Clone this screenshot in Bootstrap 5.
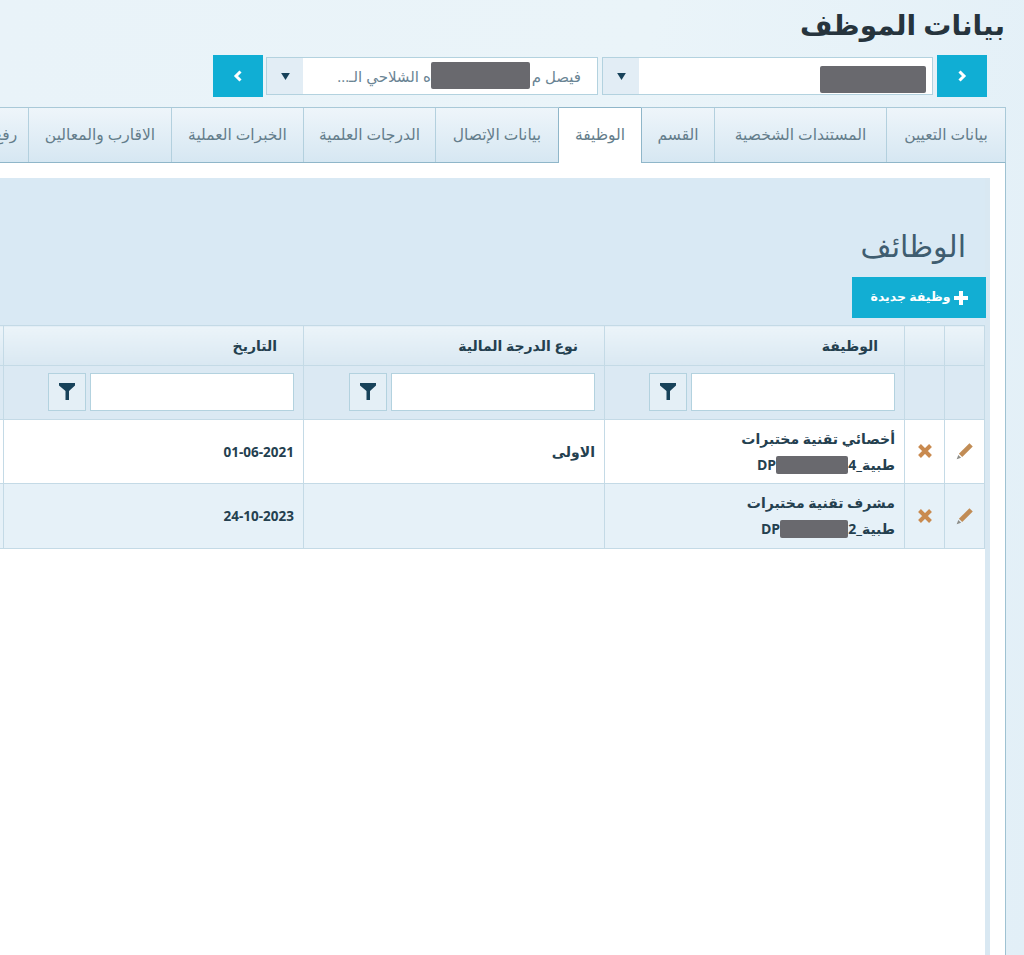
<!DOCTYPE html>
<html lang="ar" dir="rtl">
<head>
<meta charset="UTF-8">
<title>بيانات الموظف</title>
<link href="https://cdn.jsdelivr.net/npm/bootstrap@5.3.0/dist/css/bootstrap.min.css" rel="stylesheet">
<style>
html, body { height: 100%; overflow: hidden; }
body {
    font-family: "Open Sans", "DejaVu Sans", sans-serif;
    color: #24404f;
    background: linear-gradient(100deg, #e9f3f9 0%, #eaf4f9 55%, #e2eff7 100%);
    padding: 10px 18px 0 0;
    display: flex;
    flex-direction: column;
}
.page-title { font-size: 28px; font-weight: 700; color: #26343d; margin: 0; height: 45px; line-height: 28px; padding-right: 1px; }
.picker-row { padding-right: 19px; height: 42px; gap: 4px; margin-bottom: 10px; }
.arrow-btn { width: 50px; height: 42px; background: #10aed4; border: 0; border-radius: 0; padding: 0; display: flex; align-items: center; justify-content: center; }
.combo { height: 38px; background: #fff; border: 1px solid #b3d2df; margin-top: 2px; display: flex; }
.combo-one { width: 331px; }
.combo-two { width: 332px; margin-left: -1px; }
.combo-text { flex: 1; font-size: 15px; color: #6a8494; padding-right: 16px; line-height: 36px; white-space: nowrap; overflow: hidden; }
.combo-one .combo-text { padding-right: 6px; padding-top: 8px; line-height: 0; }
.combo-caret { width: 36px; background: #e2edf5; display: flex; align-items: center; justify-content: center; }
.redact { display: inline-block; background: #69696e; border-radius: 2px; vertical-align: middle; }
.redact-a { width: 106px; height: 27px; }
.redact-b { width: 99px; height: 27px; margin: -4px 2px 0 0; }
.redact-c { width: 72px; height: 18px; margin-top: -2px; }
.redact-d { width: 68px; height: 18px; margin-top: -2px; }
.emp-tabs { flex-wrap: nowrap; padding-right: 0; height: 56px; flex-shrink: 0; border-top: 1px solid #a9c9d8; border-bottom: 1px solid #8fb6c9; border-right: 1px solid #a9c9d8; background: linear-gradient(#eef5fa, #d6e7f2); }
.emp-tabs .nav-item { flex-shrink: 0; border-left: 1px solid #b3d0de; }
.emp-tabs .nav-link { height: 54px; line-height: 52px; padding: 0; text-align: center; font-size: 15.5px; color: #647d8b; border: 0; border-radius: 0; background: transparent; white-space: nowrap; }
.emp-tabs .nav-link.active { background: #fff; height: 56px; margin-top: -1px; border-top: 1px solid #8fb6c9; color: #647d8b; }
.emp-tabs .nav-item.active-item { margin-right: -1px; border-right: 1px solid #8fb6c9; border-left: 1px solid #8fb6c9; }
.emp-tabs .nav-item:nth-child(1) { width: 119px; }
.emp-tabs .nav-item:nth-child(2) { width: 172px; }
.emp-tabs .nav-item:nth-child(3) { width: 73px; }
.emp-tabs .nav-item:nth-child(4) { width: 84px; }
.emp-tabs .nav-item:nth-child(5) { width: 123px; }
.emp-tabs .nav-item:nth-child(6) { width: 132px; }
.emp-tabs .nav-item:nth-child(7) { width: 132px; }
.emp-tabs .nav-item:nth-child(8) { width: 143px; }
.emp-tabs .nav-item:nth-child(9) { width: 100px; }
.tab-body { flex: 1; background: #fff; border-right: 1px solid #9fc2d2; padding: 15px 15px 0 0; display: flex; flex-direction: column; min-height: 0; }
.inner-box { flex: 1; border-right: 5px solid #d9e8f2; background: linear-gradient(#d9e9f4 0, #d9e9f4 147px, #fff 147px); }
.jobs-title { font-size: 30px; font-weight: 400; color: #3f5d70; margin: 0; padding: 50px 19px 0 0; height: 99px; line-height: 36px; }
.new-job { display: flex; width: 134px; height: 41px; margin-right: -1px; align-items: center; justify-content: center; gap: 3px; background: #12aed3; color: #fff; font-size: 12.5px; font-weight: 700; border: 0; border-radius: 0; padding: 0; }
.jobs-table { table-layout: fixed; width: 1281px; margin: 7px 0 0; font-size: 14px; font-weight: 700; color: #24404f; --bs-table-border-color: #c4dae6; --bs-table-bg: transparent; }
.jobs-table > * > * > * { padding: 0; vertical-align: middle; color: #24404f; }
.head-row th { height: 40px; padding-right: 26px; background: linear-gradient(#ecf4f9, #d9e8f2); font-weight: 700; }
.filter-row td { height: 54px; background: #dbe9f3; padding: 0 9px 2px 0; }
.filter-wrap { display: flex; gap: 4px; }
.filter-wrap .form-control { width: 204px; height: 38px; border: 1px solid #b3d2df; border-radius: 0; background: #fff; padding: 0; }
.filter-btn { width: 38px; height: 38px; padding: 0; background: #e4eff6; border: 1px solid #b3d2df; border-radius: 0; display: flex; align-items: center; justify-content: center; }
.data-row td { height: 64px; background: #fff; padding: 0 9px 0 0; line-height: 26px; }
.data-row.alt td { height: 65px; background: #e6f1f8; }
.data-row td.icon-cell { text-align: center; padding: 0 0 3px; }
.date-cell { font-size: 13.5px; }
.col-icon { width: 40px; }
.col-wide { width: 300px; }
.col-mid { width: 301px; }
.job-code { unicode-bidi: isolate; direction: ltr; display: inline-block; }
</style>
</head>
<body>
<h1 class="page-title">بيانات الموظف</h1>

<div class="d-flex picker-row">
    <button type="button" class="arrow-btn"><svg width="10" height="12" viewBox="0 0 10 12"><path d="M2.5 1.5 7 6l-4.500 4.500" fill="none" stroke="#fff" stroke-width="3"/></svg></button>
    <div class="combo combo-one">
        <div class="combo-text"><span class="redact redact-a"></span></div>
        <div class="combo-caret"><svg width="9" height="7" viewBox="0 0 10 8"><path d="M0 0h10L5 8z" fill="#17425a"/></svg></div>
    </div>
    <div class="combo combo-two">
        <div class="combo-text">فيصل م<span class="redact redact-b"></span>ه الشلاحي الـ...</div>
        <div class="combo-caret"><svg width="9" height="7" viewBox="0 0 10 8"><path d="M0 0h10L5 8z" fill="#17425a"/></svg></div>
    </div>
    <button type="button" class="arrow-btn"><svg width="10" height="12" viewBox="0 0 10 12"><path d="M7.500 1.500 3 6l4.500 4.500" fill="none" stroke="#fff" stroke-width="3"/></svg></button>
</div>

<ul class="nav nav-tabs emp-tabs">
    <li class="nav-item"><a class="nav-link" href="#">بيانات التعيين</a></li>
    <li class="nav-item"><a class="nav-link" href="#">المستندات الشخصية</a></li>
    <li class="nav-item"><a class="nav-link" href="#">القسم</a></li>
    <li class="nav-item active-item"><a class="nav-link active" href="#">الوظيفة</a></li>
    <li class="nav-item"><a class="nav-link" href="#">بيانات الإتصال</a></li>
    <li class="nav-item"><a class="nav-link" href="#">الدرجات العلمية</a></li>
    <li class="nav-item"><a class="nav-link" href="#">الخبرات العملية</a></li>
    <li class="nav-item"><a class="nav-link" href="#">الاقارب والمعالين</a></li>
    <li class="nav-item"><a class="nav-link" href="#">رفع الملفات</a></li>
</ul>

<div class="tab-body">
    <div class="inner-box">
        <h3 class="jobs-title">الوظائف</h3>
        <button type="button" class="btn new-job"><svg width="14" height="14" viewBox="0 0 14 14"><path d="M5 0h4v5h5v4H9v5H5V9H0V5h5z" fill="#fff"/></svg>وظيفة جديدة</button>

        <table class="table table-bordered jobs-table">
            <colgroup>
                <col class="col-icon"><col class="col-icon"><col class="col-wide"><col class="col-mid"><col class="col-wide"><col class="col-wide">
            </colgroup>
            <thead>
                <tr class="head-row">
                    <th></th><th></th>
                    <th>الوظيفة</th>
                    <th>نوع الدرجة المالية</th>
                    <th>التاريخ</th>
                    <th></th>
                </tr>
            </thead>
            <tbody>
                <tr class="filter-row">
                    <td></td><td></td>
                    <td><div class="filter-wrap"><input type="text" class="form-control"><button type="button" class="filter-btn"><svg width="16" height="17" viewBox="0 0 16 17"><path d="M0 0h16v2.500l-6 5.500v9H6.500V8L0 2.500z" fill="#17425a"/></svg></button></div></td>
                    <td><div class="filter-wrap"><input type="text" class="form-control"><button type="button" class="filter-btn"><svg width="16" height="17" viewBox="0 0 16 17"><path d="M0 0h16v2.500l-6 5.500v9H6.500V8L0 2.500z" fill="#17425a"/></svg></button></div></td>
                    <td><div class="filter-wrap"><input type="text" class="form-control"><button type="button" class="filter-btn"><svg width="16" height="17" viewBox="0 0 16 17"><path d="M0 0h16v2.500l-6 5.500v9H6.500V8L0 2.500z" fill="#17425a"/></svg></button></div></td>
                    <td></td>
                </tr>
                <tr class="data-row">
                    <td class="icon-cell"><svg width="20" height="20" viewBox="0 0 18 18"><path d="M3.500 11.500 13 2l3 3-9.500 9.500z" fill="#c18c55"/><path d="M3 12.500 5.500 15 1.500 16.500z" fill="#8d8d88"/></svg></td>
                    <td class="icon-cell"><svg width="14" height="14" viewBox="0 0 14 14"><path d="M1.500 1.500l11 11M12.500 1.500l-11 11" stroke="#c98a4f" stroke-width="4" fill="none"/></svg></td>
                    <td>أخصائي تقنية مختبرات<br><span class="job-code">DP<span class="redact redact-c"></span>4_طبية</span></td>
                    <td>الاولى</td>
                    <td class="date-cell">01-06-2021</td>
                    <td></td>
                </tr>
                <tr class="data-row alt">
                    <td class="icon-cell"><svg width="20" height="20" viewBox="0 0 18 18"><path d="M3.500 11.500 13 2l3 3-9.500 9.500z" fill="#c18c55"/><path d="M3 12.500 5.500 15 1.500 16.500z" fill="#8d8d88"/></svg></td>
                    <td class="icon-cell"><svg width="14" height="14" viewBox="0 0 14 14"><path d="M1.500 1.500l11 11M12.500 1.500l-11 11" stroke="#c98a4f" stroke-width="4" fill="none"/></svg></td>
                    <td>مشرف تقنية مختبرات<br><span class="job-code">DP<span class="redact redact-d"></span>2_طبية</span></td>
                    <td></td>
                    <td class="date-cell">24-10-2023</td>
                    <td></td>
                </tr>
            </tbody>
        </table>
    </div>
</div>
<script src="https://cdn.jsdelivr.net/npm/bootstrap@5.3.0/dist/js/bootstrap.bundle.min.js"></script>
</body>
</html>
